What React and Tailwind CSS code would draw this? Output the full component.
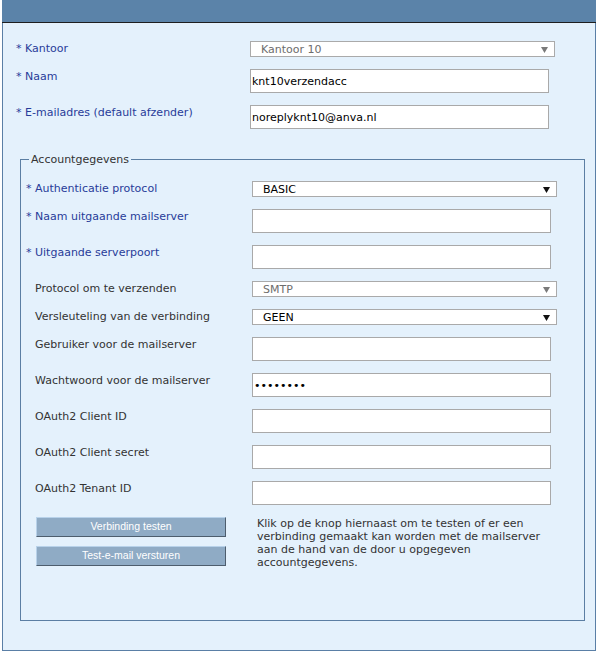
const topRows = [
  { label: 'Kantoor', kind: 'select', value: 'Kantoor 10', disabled: true },
  { label: 'Naam', kind: 'input', value: 'knt10verzendacc' },
  { label: 'E-mailadres (default afzender)', kind: 'input', value: 'noreplyknt10@anva.nl' },
]

const accountRows = [
  { label: 'Authenticatie protocol', required: true, kind: 'select', value: 'BASIC' },
  { label: 'Naam uitgaande mailserver', required: true, kind: 'input', value: '' },
  { label: 'Uitgaande serverpoort', required: true, kind: 'input', value: '' },
  { label: 'Protocol om te verzenden', kind: 'select', value: 'SMTP', disabled: true },
  { label: 'Versleuteling van de verbinding', kind: 'select', value: 'GEEN' },
  { label: 'Gebruiker voor de mailserver', kind: 'input', value: '' },
  { label: 'Wachtwoord voor de mailserver', kind: 'password', value: 'geheim12' },
  { label: 'OAuth2 Client ID', kind: 'input', value: '' },
  { label: 'OAuth2 Client secret', kind: 'input', value: '' },
  { label: 'OAuth2 Tenant ID', kind: 'input', value: '' },
]

function Arrow({ disabled }) {
  return (
    <svg width="7" height="6" viewBox="0 0 7 6" className="shrink-0">
      <path d="M0 0 L7 0 L3.5 6 Z" fill={disabled ? '#7a7a7a' : '#111'} />
    </svg>
  )
}

function Control({ row }) {
  if (row.kind === 'select') {
    return (
      <div
        className={`flex h-[16px] w-[305px] items-center justify-between border border-[#aaaaaa] bg-white pl-[10px] pr-[6px] pt-[1px] leading-none ${
          row.disabled ? 'text-[#6d6d6d]' : 'text-black'
        }`}
      >
        <span>{row.value}</span>
        <Arrow disabled={row.disabled} />
      </div>
    )
  }
  return (
    <input
      type={row.kind === 'password' ? 'password' : 'text'}
      value={row.value}
      readOnly
      className="h-[24px] w-[299px] border border-[#a9a9a9] bg-white px-[1px] text-[11px] text-black outline-none"
    />
  )
}

function Row({ row, labelWidth, star = true }) {
  return (
    <div className="flex items-start">
      <div className={`shrink-0 pt-[1px] leading-[13px] ${star ? 'text-[#283c99]' : 'text-[#333]'}`} style={{ width: labelWidth }}>
        <span className={star ? '' : 'invisible'}>* </span>
        {row.label}
      </div>
      <Control row={row} />
    </div>
  )
}

export default function App() {
  return (
    <div className="h-[653px] w-[598px] bg-white font-['DejaVu_Sans',sans-serif] text-[11px]">
      <div className="ml-[2px] flex h-[651px] w-[594px] flex-col border-x border-b border-[#5a7fa6] bg-[#e4f1fc]">
        <div className="-mx-px h-[23px] shrink-0 border-b border-[#1e1e1e] bg-[#5b83a9]" />

        <div className="flex flex-col gap-[12px] pl-[13px] pt-[18px]">
          {topRows.map((row) => (
            <Row key={row.label} row={row} labelWidth={234} />
          ))}
        </div>

        <fieldset className="ml-[17px] mt-[24px] w-[565px] border border-[#5b7ea3] pb-[51px] pl-[5px] pt-[15px]">
          <legend className="ml-[3px] px-[2px] leading-[13px] text-[#333]">Accountgegevens</legend>

          <div className="flex flex-col gap-[12px]">
            {accountRows.map((row) => (
              <Row key={row.label} row={row} labelWidth={226} star={!!row.required} />
            ))}

            <div className="flex items-start">
              <div className="ml-[10px] flex w-[190px] flex-col gap-[9px] font-['Liberation_Sans',sans-serif] text-[10.5px] text-white">
                <button className="h-[20px] border border-b-[#4d5d6d] border-l-[#b8d2ea] border-r-[#4d5d6d] border-t-[#b8d2ea] bg-[#8fabc5]">
                  Verbinding testen
                </button>
                <button className="h-[20px] border border-b-[#4d5d6d] border-l-[#b8d2ea] border-r-[#4d5d6d] border-t-[#b8d2ea] bg-[#8fabc5]">
                  Test-e-mail versturen
                </button>
              </div>
              <p className="ml-[31px] w-[292px] leading-[13px] text-[#333]">
                Klik op de knop hiernaast om te testen of er een verbinding gemaakt kan worden met de mailserver aan de
                hand van de door u opgegeven accountgegevens.
              </p>
            </div>
          </div>
        </fieldset>
      </div>
    </div>
  )
}
